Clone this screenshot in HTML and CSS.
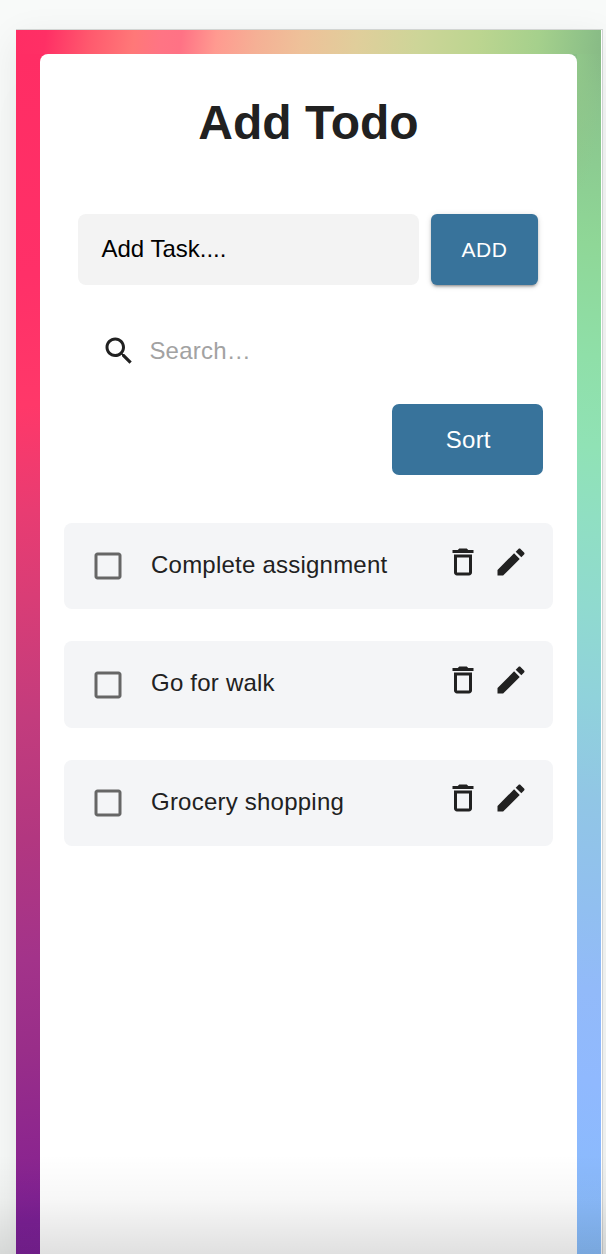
FILE: index.html
```
<!DOCTYPE html>
<html lang="en">
<head>
<meta charset="utf-8">
<title>Add Todo</title>
<link rel="stylesheet" href="styles.css">
</head>
<body>
<svg class="sprite" aria-hidden="true">
  <symbol id="search" viewBox="0 0 24 24"><path d="M15.5 14h-.79l-.28-.27C15.41 12.59 16 11.11 16 9.5 16 5.91 13.09 3 9.5 3S3 5.91 3 9.5 5.91 16 9.5 16c1.61 0 3.09-.59 4.23-1.57l.27.28v.79l5 4.99L20.49 19l-4.99-5zm-6 0C7.01 14 5 11.99 5 9.5S7.01 5 9.5 5 14 7.01 14 9.5 11.99 14 9.5 14z"/></symbol>
  <symbol id="box" viewBox="0 0 24 24"><path d="M19 5v14H5V5h14m0-2H5c-1.100 0-2 .9-2 2v14c0 1.100.9 2 2 2h14c1.100 0 2-.9 2-2V5c0-1.100-.9-2-2-2z"/></symbol>
  <symbol id="trash" viewBox="0 0 24 24"><path d="M6 19c0 1.100.9 2 2 2h8c1.100 0 2-.9 2-2V7H6v12zM8 9h8v10H8V9zm7.500-5l-1-1h-5l-1 1H5v2h14V4z"/></symbol>
  <symbol id="pencil" viewBox="0 0 24 24"><path d="M3 17.250V21h3.750L17.810 9.940l-3.750-3.750L3 17.250zM20.710 7.040c.39-.39.39-1.020 0-1.410l-2.340-2.340c-.39-.39-1.020-.39-1.410 0l-1.830 1.830 3.750 3.750 1.830-1.830z"/></symbol>
</svg>
<main class="frame">
  <div class="backdrop">
    <section class="card">
      <h1 class="title">Add Todo</h1>
      <form class="add-row">
        <label class="task-field">Add Task....</label>
        <button class="add-button" type="button">ADD</button>
      </form>
      <div class="search">
        <svg class="icon"><use href="#search"/></svg>
        <span class="search-text">Search…</span>
      </div>
      <button class="sort-button" type="button">Sort</button>
      <ul class="todos">
        <li class="todo">
          <svg class="icon check"><use href="#box"/></svg>
          <span class="todo-text">Complete assignment</span>
          <span class="actions"><svg class="icon"><use href="#trash"/></svg><svg class="icon"><use href="#pencil"/></svg></span>
        </li>
        <li class="todo">
          <svg class="icon check"><use href="#box"/></svg>
          <span class="todo-text">Go for walk</span>
          <span class="actions"><svg class="icon"><use href="#trash"/></svg><svg class="icon"><use href="#pencil"/></svg></span>
        </li>
        <li class="todo">
          <svg class="icon check"><use href="#box"/></svg>
          <span class="todo-text">Grocery shopping</span>
          <span class="actions"><svg class="icon"><use href="#trash"/></svg><svg class="icon"><use href="#pencil"/></svg></span>
        </li>
      </ul>
    </section>
  </div>
</main>
<div class="fade"></div>
</body>
</html>
```
FILE: styles.css
```
* { box-sizing: border-box; }

body {
  margin: 0;
  height: 1254px;
  overflow: hidden;
  padding: 29px 3px 0 16px;
  background: #f8faf9;
  color: #212121;
  font-family: "Liberation Sans", Arial, sans-serif;
  font-size: 24px;
}

.sprite { position: absolute; width: 0; height: 0; }

.frame {
  height: 1225px;
  border-top: 1px solid #d2d5d3;
  border-right: 1px solid #d0d3d4;
  padding-right: 1px;
  background: #fff;
  box-shadow: 0 10px 36px rgba(0, 0, 0, 0.075), 0 60px 36px rgba(0, 0, 0, 0.02);
}

.backdrop {
  height: 1224px;
  padding: 24px 24px 0;
  background:
    linear-gradient(97deg, #ff2d64 0, #ff2f65 30px, #ff5a6e 75px, #ff7878 118px, #ff7484 145px, #ff7285 165px, #ff9a90 200px, #f5b095 240px, #eec199 285px, #e0ce9b 340px, #cdd598 400px, #bcd590 460px, #a5d08c 520px, #8fc288 565px, #86b985 588px) 0 0 / 100% 24px no-repeat,
    linear-gradient(173deg, #ff2d64 0, #ff3068 220px, #ff3869 350px, #e83c72 455px, #d93d76 540px, #c33c7d 660px, #b23780 780px, #a3338a 900px, #992e89 990px, #8b258f 1100px, #7c2096 1160px, #7e229a 1200px) 0 24px / 24px 1200px no-repeat,
    radial-gradient(ellipse 24px 140px at 0 0, rgba(146, 200, 138, 0.9), rgba(146, 200, 138, 0)) 100% 24px / 24px 140px no-repeat,
    linear-gradient(187deg, #88bb86 0, #8bc48c 50px, #8ccc91 110px, #8fd797 190px, #8fdfa8 300px, #90e2b5 390px, #90dfc2 460px, #90dacf 550px, #90d2db 640px, #91c6e5 740px, #91bff0 850px, #92baf9 930px, #90b9fe 1020px, #8bbafd 1110px, #89befb 1200px) 100% 24px / 24px 1200px no-repeat,
    linear-gradient(90deg, #ff2d64 50%, #8bbf87 50%);
}

.card {
  height: 1200px;
  padding: 37px 24px 0;
  border-radius: 8px 8px 0 0;
  background: #fff;
}

.title {
  margin: 0;
  font-size: 48px;
  line-height: 64px;
  font-weight: 700;
  text-align: center;
}

.add-row {
  display: flex;
  gap: 12px;
  margin: 59.300px 15px 0 13.5px;
}

.task-field {
  flex: 1;
  height: 71px;
  padding-left: 24px;
  border-radius: 8px;
  background: #f3f3f3;
  color: #000;
  line-height: 69px;
}

button {
  border: 0;
  padding: 0;
  background: #38739b;
  color: #fff;
  font-family: inherit;
}

.add-button {
  width: 107px;
  height: 71px;
  border-radius: 6px;
  font-size: 21px;
  letter-spacing: 0.6px;
  box-shadow: 0 4px 2px -3px rgba(0, 0, 0, 0.2), 0 2px 3px rgba(0, 0, 0, 0.2), 0 1px 6px rgba(0, 0, 0, 0.12);
}

.icon {
  display: block;
  width: 36px;
  height: 36px;
  fill: #212121;
}

.search {
  display: flex;
  align-items: center;
  gap: 12px;
  height: 36px;
  margin: 47.700px 0 0 37.400px;
}

.search-text {
  color: #a2a2a2;
  letter-spacing: 0.225px;
}

.sort-button {
  display: block;
  width: 151px;
  height: 70.500px;
  margin: 35.300px 9.700px 0 auto;
  padding: 1px 0 0 1px;
  border-radius: 7px;
  font-size: 24px;
  letter-spacing: 0.225px;
}

.todos {
  display: grid;
  gap: 32px;
  margin: 48.200px 0 0;
  padding: 0;
  list-style: none;
}

.todo {
  display: flex;
  height: 86.400px;
  padding: 0 24px 0 25.500px;
  border-radius: 8px;
  background: #f4f5f7;
}

.check {
  margin-top: 25.300px;
  fill: #666;
}

.todo-text {
  flex: 1;
  margin-left: 25.500px;
  line-height: 83px;
  letter-spacing: 0.225px;
}

.actions {
  display: flex;
  gap: 12px;
  padding-top: 20.600px;
}

.fade {
  position: absolute;
  left: 0;
  right: 0;
  top: 1154px;
  height: 100px;
  background: linear-gradient(rgba(0, 0, 0, 0), rgba(0, 0, 0, 0.03) 45%, rgba(0, 0, 0, 0.12));
}
```
